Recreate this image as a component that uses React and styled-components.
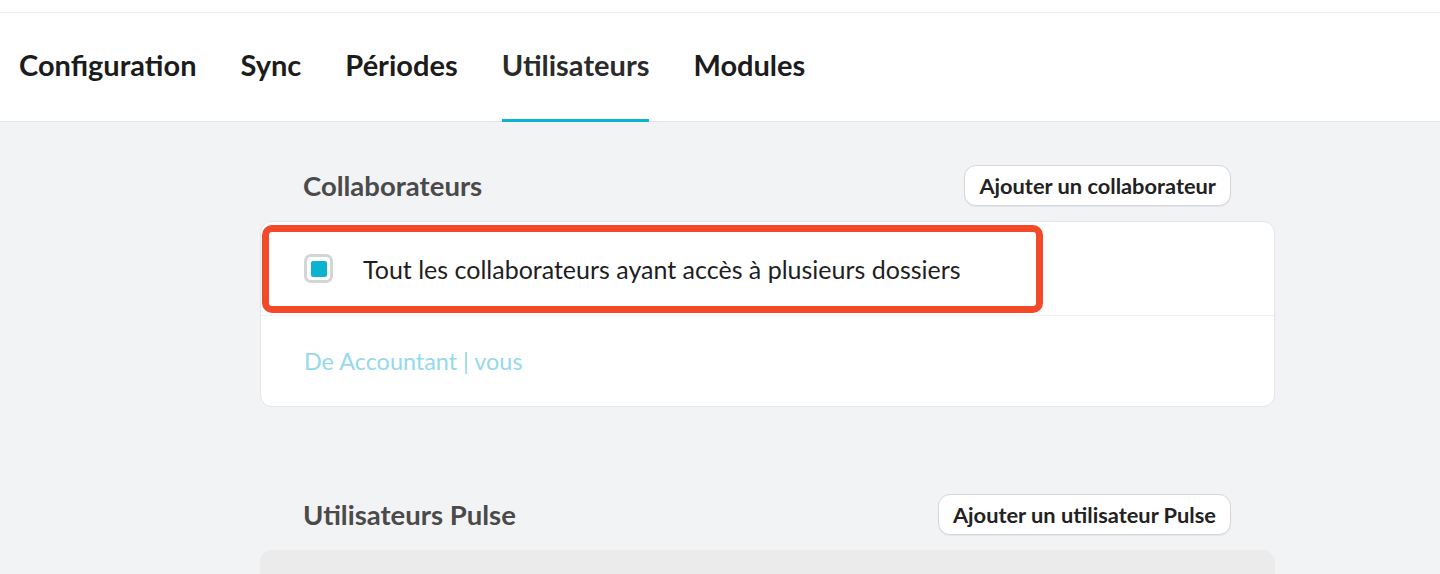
import React from "react";
import styled, { createGlobalStyle } from "styled-components";

const Global = createGlobalStyle`
    body {
        margin: 0;
        background: #f2f3f5;
        font-family: Lato, "Open Sans", sans-serif;
    }
`;

const Page = styled.div`
    height: 574px;
    overflow: hidden;
    background: #f2f3f5;
`;

const TopStrip = styled.div`
    height: 12px;
    background: #fff;
    border-bottom: 1px solid #ececec;
`;

const Nav = styled.nav`
    display: flex;
    align-items: stretch;
    gap: 44px;
    height: 108px;
    padding-left: 19px;
    background: #fff;
    border-bottom: 1px solid #e3e4e7;
`;

const Tab = styled.div`
    display: flex;
    align-items: center;
    padding-bottom: 4px;
    font-size: 29px;
    font-weight: 700;
    color: ${(props) => (props.active ? "#2b2b2b" : "#1c1c1c")};
    border-bottom: 3px solid ${(props) => (props.active ? "#0bb3d1" : "transparent")};
    margin-bottom: -1px;
    box-sizing: border-box;
`;

const Content = styled.main`
    width: 1015px;
    margin-left: 260px;
    padding-top: 43px;
`;

const Section = styled.section`
    margin-bottom: ${(props) => props.spacing || "0"};
`;

const SectionHeader = styled.div`
    display: flex;
    align-items: center;
    justify-content: space-between;
    padding: 0 44px 0 43px;
    margin-bottom: 15px;
`;

const Title = styled.h2`
    margin: 0;
    font-size: 27.5px;
    font-weight: 700;
    color: #4a4a4a;
`;

const Button = styled.button`
    height: 41px;
    padding: 0 14px;
    font-family: Lato, "Open Sans", sans-serif;
    font-size: 21.8px;
    font-weight: 700;
    color: #222;
    background: #fff;
    border: 1px solid #d6d7da;
    border-radius: 12px;
    box-shadow: 0 1px 1px rgba(0, 0, 0, 0.06);
`;

const Card = styled.div`
    background: ${(props) => (props.muted ? "#ebebeb" : "#fff")};
    border: 1px solid ${(props) => (props.muted ? "#ebebeb" : "#e4e5e8")};
    border-radius: 12px;
    min-height: ${(props) => props.minHeight || "auto"};
`;

const Row = styled.div`
    position: relative;
    display: flex;
    align-items: center;
    height: ${(props) => props.height};
    padding-left: 43px;
    border-bottom: ${(props) => (props.divider ? "1px solid #efefef" : "none")};
`;

const Checkbox = styled.div`
    width: 29px;
    height: 29px;
    box-sizing: border-box;
    border: 3px solid #d4d5d8;
    border-radius: 7px;
    display: flex;
    align-items: center;
    justify-content: center;
    margin-right: 30px;
    &::after {
        content: "";
        width: 16px;
        height: 16px;
        border-radius: 2px;
        background: #0bb3d1;
    }
`;

const Label = styled.span`
    font-size: 25px;
    color: #1e1e1e;
`;

const Muted = styled.span`
    font-size: 23.4px;
    color: #95d9eb;
`;

const Highlight = styled.div`
    position: absolute;
    left: 1px;
    top: 3px;
    width: 781px;
    height: 88px;
    box-sizing: border-box;
    border: 7px solid #f24a29;
    border-radius: 10px;
    pointer-events: none;
`;

const tabs = ["Configuration", "Sync", "Périodes", "Utilisateurs", "Modules"];

export default function App() {
    return (
        <Page>
            <Global />
            <TopStrip />
            <Nav>
                {tabs.map((t) => (
                    <Tab key={t} active={t === "Utilisateurs"}>
                        {t}
                    </Tab>
                ))}
            </Nav>
            <Content>
                <Section spacing="87px">
                    <SectionHeader>
                        <Title>Collaborateurs</Title>
                        <Button>Ajouter un collaborateur</Button>
                    </SectionHeader>
                    <Card>
                        <Row height="93px" divider>
                            <Highlight />
                            <Checkbox />
                            <Label>Tout les collaborateurs ayant accès à plusieurs dossiers</Label>
                        </Row>
                        <Row height="90px">
                            <Muted>De Accountant | vous</Muted>
                        </Row>
                    </Card>
                </Section>
                <Section>
                    <SectionHeader>
                        <Title>Utilisateurs Pulse</Title>
                        <Button>Ajouter un utilisateur Pulse</Button>
                    </SectionHeader>
                    <Card muted minHeight="120px" />
                </Section>
            </Content>
        </Page>
    );
}
